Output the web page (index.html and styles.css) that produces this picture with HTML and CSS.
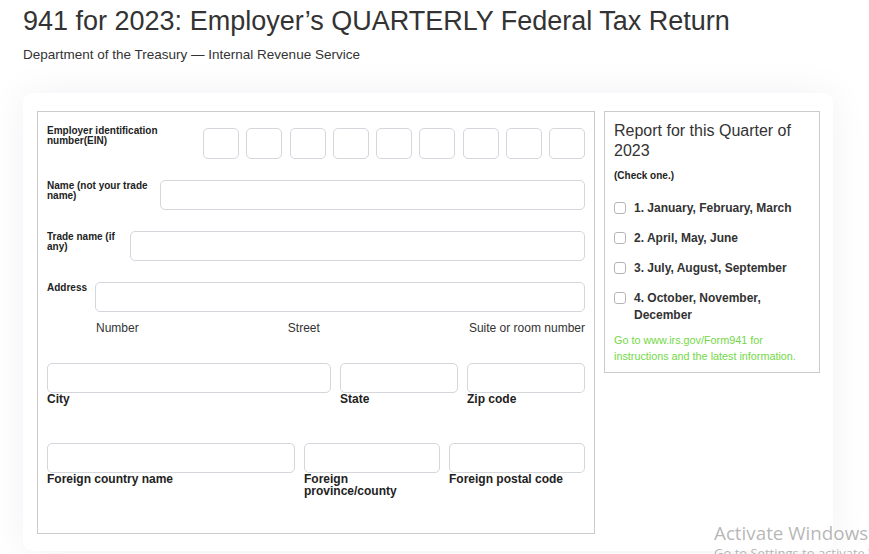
FILE: index.html
```html
<!DOCTYPE html>
<html lang="en">
<head>
<meta charset="utf-8">
<title>941 for 2023</title>
<link rel="stylesheet" href="styles.css">
</head>
<body>
<header class="page-head">
  <h1 class="title">941 for 2023: Employer’s QUARTERLY Federal Tax Return</h1>
  <p class="subtitle">Department of the Treasury — Internal Revenue Service</p>
</header>
<main class="card">
  <section class="form-box">
    <div class="row row-ein">
      <label class="lbl lbl-ein">Employer identification number(EIN)</label>
      <div class="ein-boxes">
        <span class="box ein"></span><span class="box ein"></span><span class="box ein"></span>
        <span class="box ein"></span><span class="box ein"></span><span class="box ein"></span>
        <span class="box ein"></span><span class="box ein"></span><span class="box ein"></span>
      </div>
    </div>
    <div class="row row-field">
      <label class="lbl lbl-name">Name (not your trade name)</label>
      <span class="box field"></span>
    </div>
    <div class="row row-field">
      <label class="lbl lbl-trade">Trade name (if any)</label>
      <span class="box field"></span>
    </div>
    <div class="row row-field row-address">
      <label class="lbl lbl-address">Address</label>
      <div class="address-col">
        <span class="box addr-field"></span>
        <div class="sublabels"><span>Number</span><span>Street</span><span>Suite or room number</span></div>
      </div>
    </div>
    <div class="grid grid-city">
      <div class="cell"><span class="box cellbox"></span><span class="cap">City</span></div>
      <div class="cell"><span class="box cellbox"></span><span class="cap">State</span></div>
      <div class="cell"><span class="box cellbox"></span><span class="cap">Zip code</span></div>
    </div>
    <div class="grid grid-foreign">
      <div class="cell"><span class="box cellbox"></span><span class="cap">Foreign country name</span></div>
      <div class="cell"><span class="box cellbox"></span><span class="cap">Foreign province/county</span></div>
      <div class="cell"><span class="box cellbox"></span><span class="cap">Foreign postal code</span></div>
    </div>
  </section>
  <aside class="quarter-box">
    <h2 class="q-title">Report for this Quarter of 2023</h2>
    <p class="q-note">(Check one.)</p>
    <ul class="q-list">
      <li class="q-item"><span class="chk"></span><span class="q-text">1. January, February, March</span></li>
      <li class="q-item"><span class="chk"></span><span class="q-text">2. April, May, June</span></li>
      <li class="q-item"><span class="chk"></span><span class="q-text">3. July, August, September</span></li>
      <li class="q-item"><span class="chk"></span><span class="q-text">4. October, November, December</span></li>
    </ul>
    <p class="q-info">Go to www.irs.gov/Form941 for instructions and the latest information.</p>
  </aside>
</main>
<div class="watermark"><div class="wm-1">Activate Windows</div><div class="wm-2">Go to Settings to activate Windows.</div></div>
</body>
</html>
```

FILE: styles.css
```css
* { box-sizing: border-box; }
html, body { margin: 0; padding: 0; }
body {
  width: 869px;
  height: 554px;
  overflow: hidden;
  background: #ffffff;
  font-family: "Liberation Sans", Arial, sans-serif;
  color: #333;
  position: relative;
}
.page-head { padding: 4px 23px 0; }
.title {
  margin: 0;
  font-size: 27px;
  font-weight: normal;
  line-height: 34px;
  color: #333;
}
.subtitle {
  margin: 9px 0 0;
  font-size: 13.5px;
  line-height: 16px;
  color: #333;
}
.card {
  margin: 30px 36px 0 23px;
  background: #fff;
  border-radius: 10px;
  box-shadow: 0 0 40px rgba(30, 40, 90, 0.06);
  padding: 18px 13px 17px 14px;
  display: flex;
  align-items: flex-start;
  gap: 9px;
  height: 458px;
}
.form-box {
  width: 558px;
  height: 423px;
  border: 1px solid #cbcbcb;
  padding: 14px 9px 0 9px;
}
.row { display: flex; align-items: flex-start; }
.lbl {
  font-size: 10px;
  font-weight: bold;
  line-height: 10px;
  color: #222;
  flex: none;
}
.box {
  display: block;
  border: 1px solid #d3d6db;
  border-radius: 5px;
  background: #fff;
}
.row-ein { justify-content: space-between; }
.lbl-ein { width: 130px; }
.ein-boxes { display: flex; justify-content: space-between; width: 382px; margin-top: 2px; }
.ein { width: 36px; height: 31px; }
.row-field { margin-top: 21px; gap: 8px; }
.row-field .lbl { padding-top: 1px; }
.row-field .field { height: 30px; flex: 1; }
.lbl-name { width: 105px; }
.lbl-trade { width: 75px; }
.lbl-address { width: 40px; }
.address-col { flex: 1; display: flex; flex-direction: column; }
.addr-field { height: 30px; }
.sublabels {
  display: flex;
  justify-content: space-between;
  font-size: 12px;
  line-height: 14px;
  margin-top: 9px;
  padding-left: 1px;
  color: #333;
}
.grid { display: grid; column-gap: 9px; }
.grid-city { grid-template-columns: 284px 118px 118px; margin-top: 28px; }
.grid-foreign { grid-template-columns: 248px 136px 136px; margin-top: 38px; }
.cell { display: flex; flex-direction: column; }
.cellbox { height: 30px; }
.cap {
  font-size: 12px;
  font-weight: bold;
  line-height: 12px;
  color: #222;
}
.quarter-box {
  width: 216px;
  height: 262px;
  border: 1px solid #cbcbcb;
  padding: 9px 9px 0 9px;
}
.q-title {
  margin: 0;
  font-size: 16px;
  font-weight: normal;
  line-height: 20px;
  color: #333;
}
.q-note {
  margin: 9px 0 0;
  font-size: 10px;
  font-weight: bold;
  line-height: 12px;
  color: #222;
}
.q-list { list-style: none; margin: 18px 0 0; padding: 0; }
.q-item { display: flex; align-items: flex-start; gap: 8px; margin-bottom: 13px; }
.q-item:last-child { margin-bottom: 0; }
.chk {
  flex: none;
  width: 12px;
  height: 12px;
  border: 1px solid #b5b5b5;
  border-radius: 3px;
  margin-top: 2px;
  background: #fff;
}
.q-text {
  font-size: 12px;
  font-weight: bold;
  line-height: 17px;
  color: #333;
}
.q-info {
  margin: 8px 0 0;
  font-size: 10.8px;
  line-height: 16px;
  color: #72d846;
}
.watermark {
  position: absolute;
  left: 714px;
  top: 521px;
  color: rgba(120, 120, 120, 0.55);
  font-family: "Open Sans", "DejaVu Sans", sans-serif;
  white-space: nowrap;
}
.wm-1 { font-size: 18.8px; line-height: 24px; }
.wm-2 { font-size: 13px; line-height: 16px; }
```
